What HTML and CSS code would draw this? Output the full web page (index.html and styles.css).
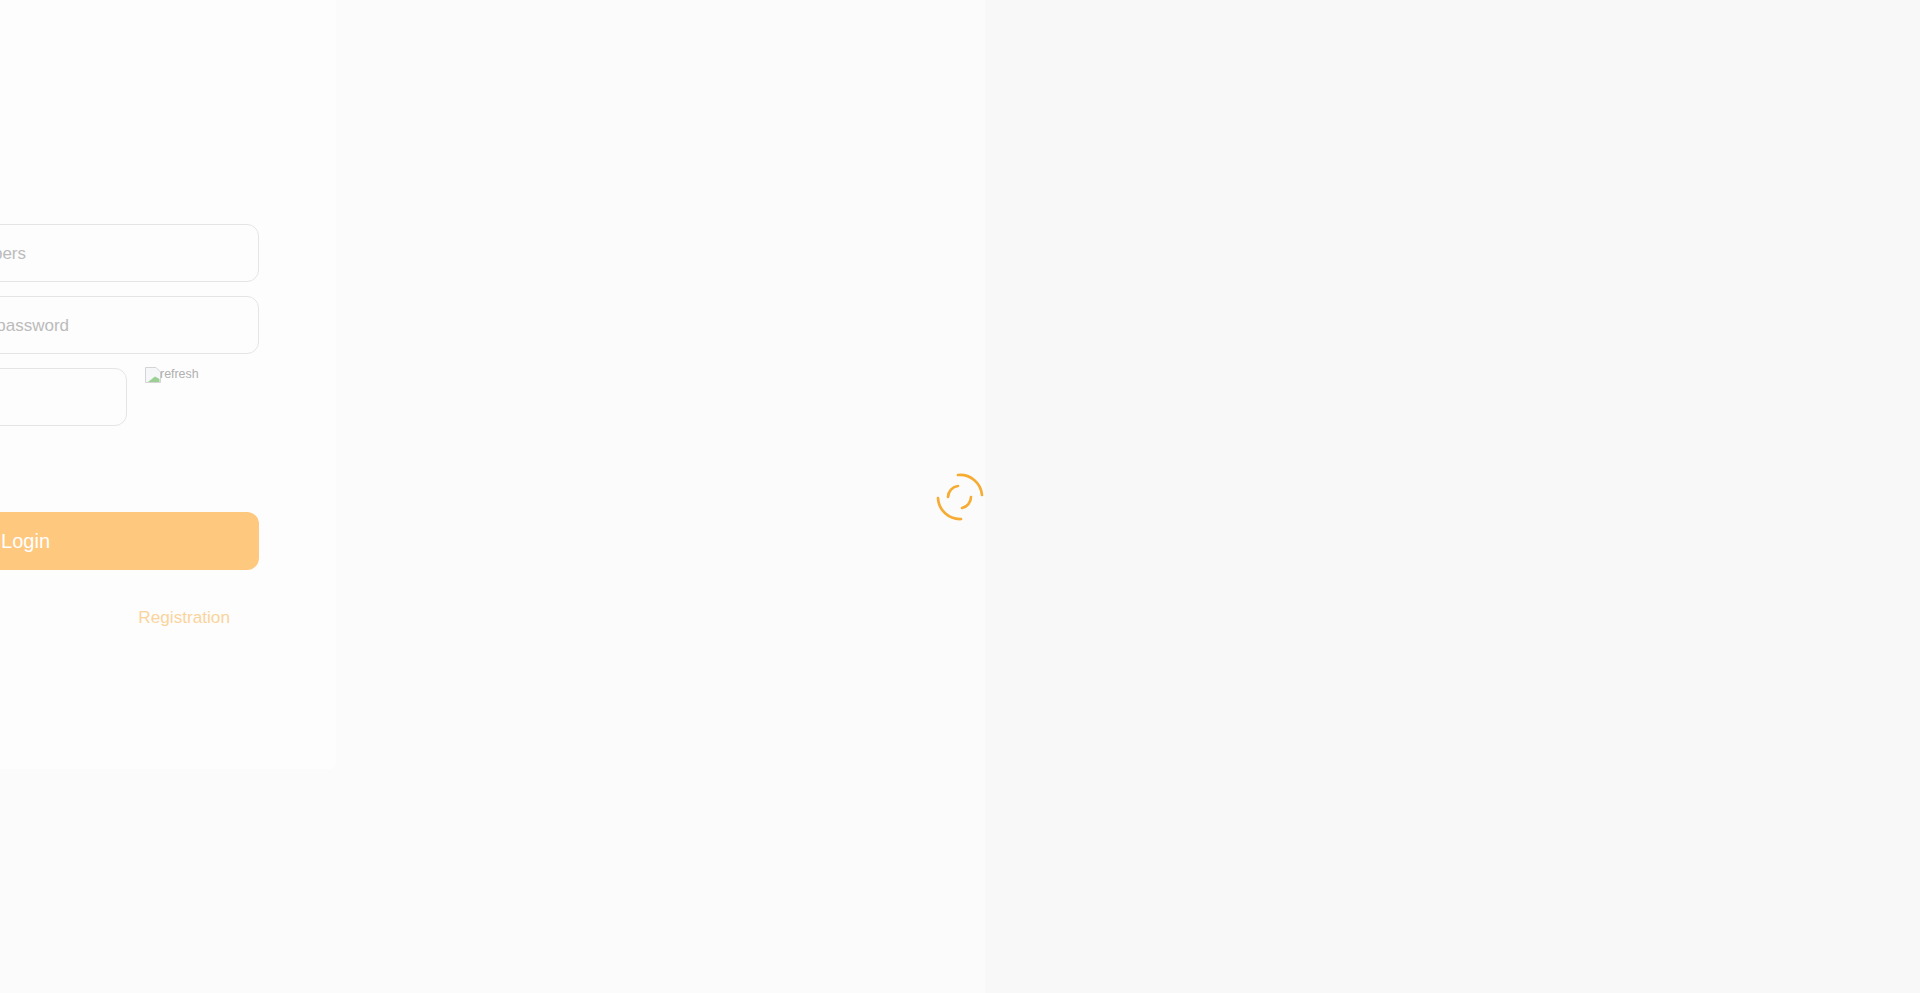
FILE: index.html
```html
<!DOCTYPE html>
<html lang="en">
<head>
<meta charset="utf-8">
<title>Login</title>
<link rel="stylesheet" href="styles.css">
</head>
<body>
<main class="stage">
  <section class="panel">
    <form class="form">
      <div class="field"><span class="placeholder ph-user">numbers</span></div>
      <div class="field"><span class="placeholder ph-pass">password</span></div>
      <div class="captcha-row">
        <div class="field captcha-field"></div>
        <div class="captcha-img">
          <svg class="broken" viewBox="0 0 16 16" width="16" height="16" aria-hidden="true">
            <path d="M0.5 0.5H11L15.5 5V15.5H0.5Z" fill="#f5f7f9" stroke="#d4d4d4"/>
            <path d="M3 15L10 9.5L14.5 12V15Z" fill="#9ccf94"/>
          </svg><span class="alt">refresh</span>
        </div>
      </div>
      <div class="login-btn"><span>Login</span></div>
      <div class="links"><a class="register">Registration</a></div>
    </form>
  </section>
  <div class="spinner">
    <svg viewBox="0 0 48 48" width="48" height="48" fill="none" stroke="#f6ab33" stroke-width="2.7" stroke-linecap="round" aria-hidden="true">
      <path d="M22 2A22 22 0 0 1 46 22"/>
      <path d="M2 25A22 22 0 0 0 25 46"/>
      <path d="M12 24A11.5 11.5 0 0 1 22 13"/>
      <path d="M35 24A11.5 11.5 0 0 1 26 35"/>
    </svg>
  </div>
</main>
</body>
</html>
```
FILE: styles.css
```css
* { box-sizing: border-box; }
html, body { margin: 0; height: 100%; overflow: hidden; }
body { font-family: "Liberation Sans", Arial, sans-serif; background: #f9f9f9; }
.stage { position: relative; height: 993px; width: 1920px; background: linear-gradient(to right, #fbfbfb 0, #fbfbfb 985px, #f8f8f8 985px); }
.panel { position: absolute; left: -250px; top: 0; width: 586px; height: 769px; background: #fdfdfd; border-radius: 0 0 6px 6px; padding: 224px 77px 0 78px; }
.form { display: flex; flex-direction: column; }
.field { height: 58px; border: 1px solid #e5e5e5; border-radius: 12px; background: #fdfdfd; position: relative; margin-bottom: 14px; overflow: hidden; font-size: 17px; color: #bbbbbb; line-height: 57px; }
.placeholder { position: absolute; top: 0; white-space: nowrap; }
.ph-user { right: 232px; }
.ph-pass { right: 189px; }
.captcha-row { display: flex; align-items: flex-start; }
.captcha-field { width: 299px; margin: 0; }
.captcha-img { margin-left: 18px; margin-top: -1px; display: flex; align-items: flex-start; font-size: 12.4px; color: #b0b0b0; height: 17px; }
.broken { display: block; }
.alt { line-height: 14px; margin-left: -1px; }
.login-btn { margin-top: 86px; height: 58px; background: #fec87f; border-radius: 12px; color: #fff; font-size: 20px; line-height: 58px; position: relative; }
.login-btn span { position: absolute; right: 209px; }
.links { display: flex; justify-content: flex-end; padding: 37px 29px 0 0; font-size: 17.2px; line-height: 20px; }
.register { color: #fad49c; }
.spinner { position: absolute; left: 936px; top: 473px; width: 48px; height: 48px; }
```
